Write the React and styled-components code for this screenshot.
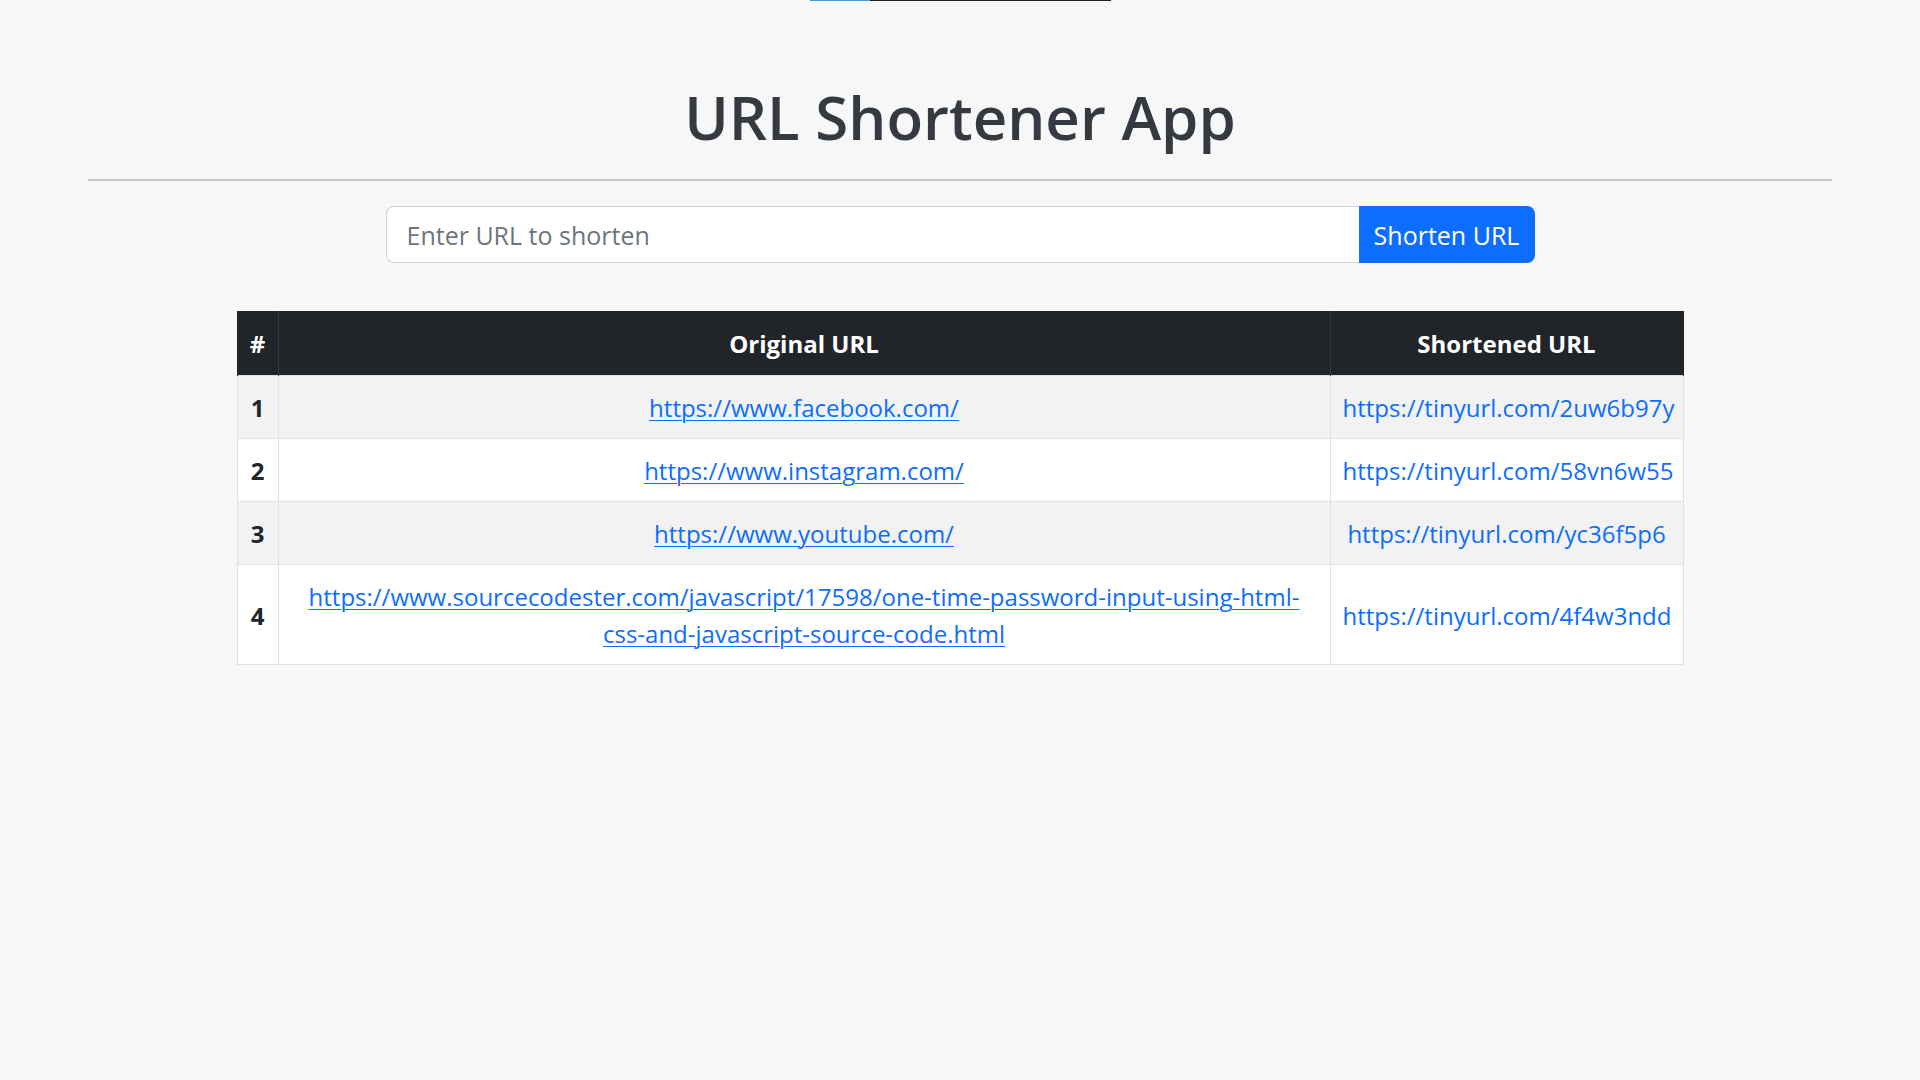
import React from "react";
import styled, { createGlobalStyle } from "styled-components";

const Global = createGlobalStyle`
  html, body { margin: 0; padding: 0; }
  body {
    background: #f7f7f7;
    font-family: "Open Sans", "Noto Sans", "Liberation Sans", sans-serif;
    color: #212529;
  }
  * { box-sizing: border-box; }
`;

const Page = styled.div`
  min-height: 1080px;
  display: flex;
  flex-direction: column;
  align-items: center;
`;

const TopStrip = styled.div`
  width: 301px;
  height: 1px;
  display: flex;
`;

const StripSegment = styled.div`
  height: 100%;
  width: ${(p) => p.$w};
  flex: ${(p) => (p.$grow ? 1 : "none")};
  background: ${(p) => p.$color};
`;

const Container = styled.div`
  width: 1744px;
  display: flex;
  flex-direction: column;
  align-items: center;
`;

const Title = styled.h1`
  margin: 80px 0 0;
  font-size: 60px;
  font-weight: 600;
  line-height: 1.2;
  color: #343a40;
  text-align: center;
`;

const Rule = styled.hr`
  width: 100%;
  margin: 26px 0 0;
  border: 0;
  border-top: 2px solid #c4c4c4;
`;

const InputGroup = styled.form`
  margin-top: 25px;
  width: 1149px;
  height: 57px;
  display: flex;
`;

const UrlInput = styled.input`
  flex: 1;
  min-width: 0;
  height: 100%;
  padding: 0 20px;
  font-family: inherit;
  font-size: 25px;
  color: #212529;
  background: #fff;
  border: 1px solid #ced4da;
  border-right: 0;
  border-radius: 8px 0 0 8px;
  outline: none;
  &::placeholder { color: #6c757d; }
`;

const Button = styled.button`
  width: 176px;
  height: 100%;
  padding: 0;
  font-family: inherit;
  font-size: 25px;
  color: #fff;
  background: #0d6efd;
  border: 0;
  border-radius: 0 8px 8px 0;
  cursor: pointer;
`;

const Table = styled.table`
  margin-top: 48px;
  width: 1446px;
  border-collapse: collapse;
  table-layout: fixed;
  font-size: 24px;
  line-height: 37px;
  text-align: center;
`;

const HeadCell = styled.th`
  background: #212529;
  color: #fff;
  font-weight: 700;
  padding: 13px 12px 13px;
  border: 1px solid #32383e;
  border-top-color: #212529;
  border-bottom: 0;
  &:first-child { border-left-color: #212529; }
  &:last-child { border-right-color: #212529; }
`;

const Row = styled.tr`
  background: ${(p) => (p.$striped ? "#f2f2f2" : "#fff")};
`;

const Cell = styled.td`
  padding: 13px 12px 12px;
  border: 1px solid #dee2e6;
  color: #212529;
  font-weight: ${(p) => (p.$bold ? 700 : 400)};
  vertical-align: middle;
`;

const Link = styled.a`
  color: #0d6efd;
  text-decoration: ${(p) => (p.$plain ? "none" : "underline")};
  text-underline-offset: 3px;
  text-decoration-thickness: 1px;
`;

const rows = [
  ["https://www.facebook.com/", "https://tinyurl.com/2uw6b97y"],
  ["https://www.instagram.com/", "https://tinyurl.com/58vn6w55"],
  ["https://www.youtube.com/", "https://tinyurl.com/yc36f5p6"],
  [
    "https://www.sourcecodester.com/javascript/17598/one-time-password-input-using-html-css-and-javascript-source-code.html",
    "https://tinyurl.com/4f4w3ndd",
  ],
];

export default function App() {
  return (
    <>
      <Global />
      <Page>
        <TopStrip>
          <StripSegment $w="60px" $color="#3d9fe3" />
          <StripSegment $grow $color="#222" />
        </TopStrip>
        <Container>
          <Title>URL Shortener App</Title>
          <Rule />
          <InputGroup onSubmit={(e) => e.preventDefault()}>
            <UrlInput type="text" placeholder="Enter URL to shorten" />
            <Button type="submit">Shorten URL</Button>
          </InputGroup>
          <Table>
            <colgroup>
              <col style={{ width: 41 }} />
              <col style={{ width: 1052 }} />
              <col style={{ width: 353 }} />
            </colgroup>
            <thead>
              <tr>
                <HeadCell>#</HeadCell>
                <HeadCell>Original URL</HeadCell>
                <HeadCell>Shortened URL</HeadCell>
              </tr>
            </thead>
            <tbody>
              {rows.map(([orig, short], i) => (
                <Row key={i} $striped={i % 2 === 0}>
                  <Cell $bold>{i + 1}</Cell>
                  <Cell>
                    <Link href={orig}>{orig}</Link>
                  </Cell>
                  <Cell>
                    <Link $plain href={short}>{short}</Link>
                  </Cell>
                </Row>
              ))}
            </tbody>
          </Table>
        </Container>
      </Page>
    </>
  );
}
